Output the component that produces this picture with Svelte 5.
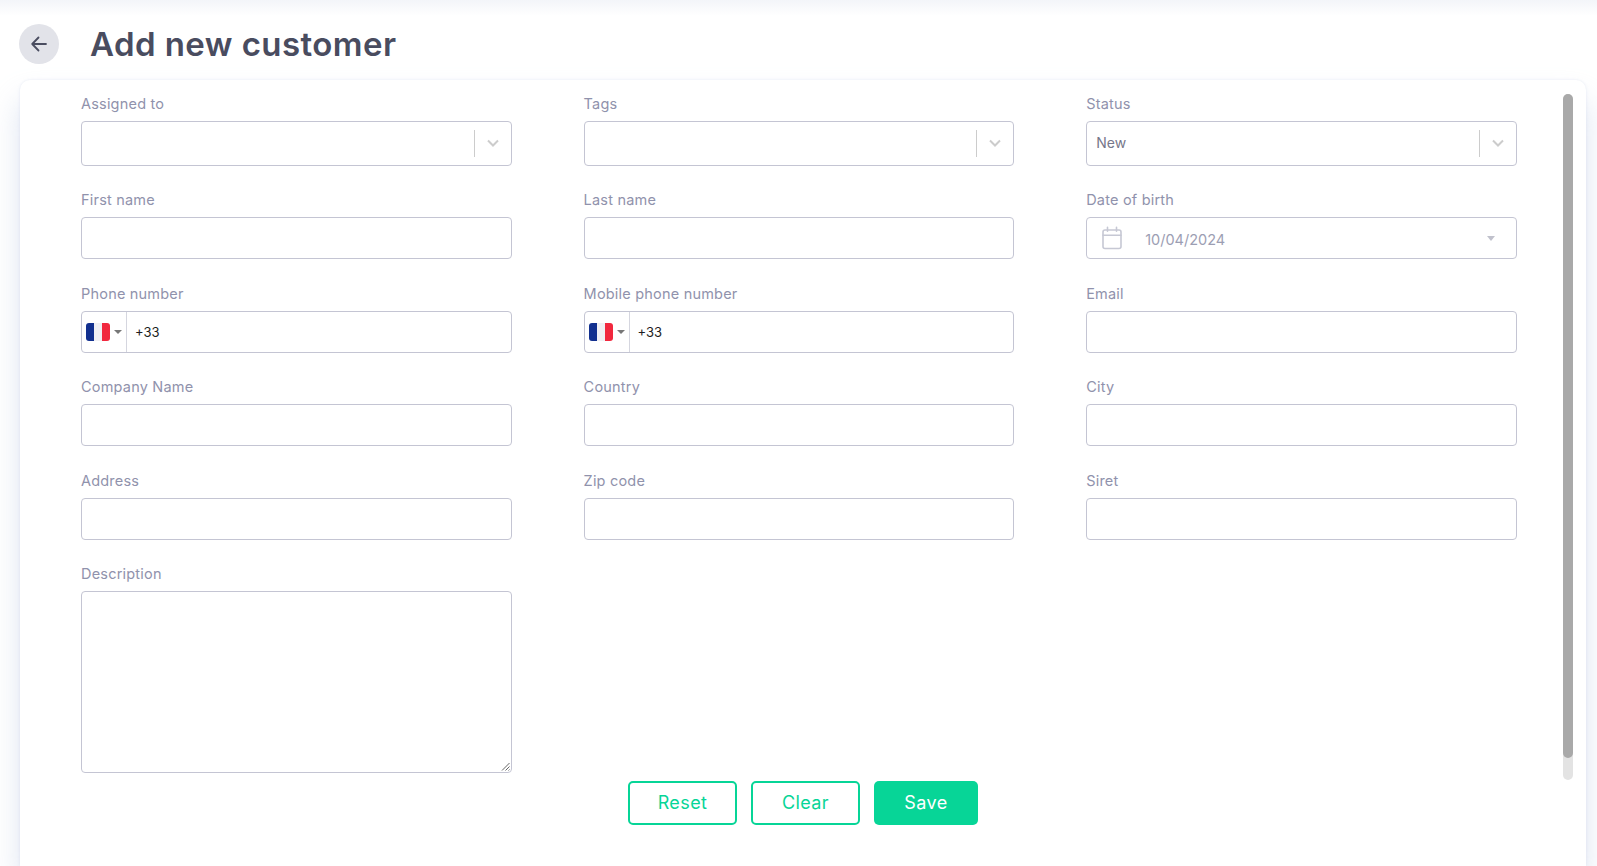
<script>
  const rows = [
    { label: 'Assigned to', type: 'select' },
    { label: 'Tags', type: 'select' },
    { label: 'Status', type: 'select', value: 'New' },
    { label: 'First name', type: 'input' },
    { label: 'Last name', type: 'input' },
    { label: 'Date of birth', type: 'date', value: '10/04/2024' },
    { label: 'Phone number', type: 'phone' },
    { label: 'Mobile phone number', type: 'phone' },
    { label: 'Email', type: 'input' },
    { label: 'Company Name', type: 'input' },
    { label: 'Country', type: 'input' },
    { label: 'City', type: 'input' },
    { label: 'Address', type: 'input' },
    { label: 'Zip code', type: 'input' },
    { label: 'Siret', type: 'input' },
    { label: 'Description', type: 'textarea' }
  ];
</script>

<div class="page">
  <header class="head">
    <button class="back" aria-label="Back">
      <svg width="20" height="20" viewBox="0 0 20 20" fill="none" stroke="#4a4d60" stroke-width="1.8" stroke-linecap="round" stroke-linejoin="round">
        <path d="M17 10H3.2M9.5 3.5 3.2 10l6.3 6.5" />
      </svg>
    </button>
    <h1>Add new customer</h1>
  </header>

  <main class="card">
    <div class="thumbtrack" aria-hidden="true"><div class="thumb"></div></div>
    <form class="grid">
      {#each rows as f}
        <div class="field">
          <span class="lab">{f.label}</span>
          {#if f.type === 'select'}
            <div class="box sel">
              <span class="val">{f.value ?? ''}</span>
              <i class="sep"></i>
              <svg class="chev" width="14" height="14" viewBox="0 0 14 14" fill="none" stroke="#cccccc" stroke-width="2"><path d="M2 4.5 7 9.5l5-5" /></svg>
            </div>
          {:else if f.type === 'date'}
            <div class="box date">
              <svg width="22" height="24" viewBox="0 0 22 24" fill="none" stroke="#c6c8d4" stroke-width="1.6" stroke-linejoin="round" stroke-linecap="round">
                <rect x="2" y="4" width="18" height="18.5" rx="2" />
                <path d="M2 9.2h18M6.5 1.2v4M15.5 1.2v4" />
              </svg>
              <span class="dateval">{f.value}</span>
              <i class="caret"></i>
            </div>
          {:else if f.type === 'phone'}
            <div class="box phone">
              <div class="dial">
                <span class="flag"><i class="b"></i><i class="w"></i><i class="r"></i></span>
                <i class="mini"></i>
              </div>
              <span class="code">+33</span>
            </div>
          {:else if f.type === 'textarea'}
            <div class="box area">
              <svg class="grip" width="9" height="9" viewBox="0 0 9 9" stroke="#666" stroke-width="1" fill="none"><path d="M1 8.5 8.5 1M4.5 8.5l4-4M7.5 8.5l1-1" /></svg>
            </div>
          {:else}
            <div class="box"></div>
          {/if}
        </div>
      {/each}
    </form>
    <div class="actions">
      <button class="btn ghost">Reset</button>
      <button class="btn ghost">Clear</button>
      <button class="btn solid">Save</button>
    </div>
  </main>
</div>

<style>
  :global(body) { margin: 0; overflow: hidden; background: #ffffff; }
  .page {
    height: 866px;
    display: flex;
    flex-direction: column;
    overflow: hidden;
    font-family: Inter, "Open Sans", sans-serif;
    background: linear-gradient(#f3f5f9 0, #ffffff 16px);
  }
  .head {
    display: flex;
    align-items: center;
    height: 80px;
    padding: 8px 0 0 19px;
    box-sizing: border-box;
    flex: none;
  }
  .back {
    width: 40px; height: 40px;
    border-radius: 50%;
    border: 0;
    background: #e2e3e9;
    display: flex; align-items: center; justify-content: center;
    padding: 0;
  }
  h1 {
    margin: 0 0 0 31px;
    font-size: 33px;
    font-weight: 600;
    color: #494c5f;
    letter-spacing: 0.43px;
  }
  .card {
    position: relative;
    flex: 1;
    margin: 0 11px 0 20px;
    padding: 13px 69px 0 61px;
    background: #fff;
    border-radius: 10px 10px 0 0;
    box-shadow: 0 0 3px rgba(190, 200, 225, 0.35), 0 20px 30px rgba(180, 195, 225, 0.45);
  }
  .thumbtrack {
    position: absolute;
    left: 1543px; top: 14px;
    width: 10px; height: 686px;
    background: #e3e3e3;
    border-radius: 5px;
  }
  .thumb {
    height: 664px;
    background: #a9a9a9;
    border-radius: 5px;
  }
  .grid {
    display: grid;
    grid-template-columns: repeat(3, 430.6px);
    column-gap: 72px;
    row-gap: 23.6px;
  }
  .field { display: flex; flex-direction: column; min-width: 0; }
  .lab {
    font-size: 14.5px;
    line-height: 22px;
    letter-spacing: 0.2px;
    margin-bottom: 6px;
    color: #9092ac;
  }
  .box {
    height: 42px;
    box-sizing: border-box;
    border: 1px solid #c4c5d3;
    border-radius: 4px;
    background: #fff;
    display: flex;
    align-items: center;
  }
  .sel { height: 44.5px; padding: 0 10px 0 9px; }
  .val { flex: 1; font-size: 14px; color: #76778a; margin-bottom: 2px; }
  .sep { width: 1px; height: 27px; background: #cccccc; margin-right: 11px; }
  .chev { margin-right: 1px; }
  .date { padding: 0 21px 0 14px; }
  .dateval { flex: 1; margin-left: 22px; margin-top: 2px; font-size: 14.5px; color: #9c9eb3; }
  .caret {
    width: 0; height: 0;
    border-left: 4px solid transparent;
    border-right: 4px solid transparent;
    border-top: 5px solid #c0c1cc;
  }
  .dial {
    width: 45px; height: 100%;
    box-sizing: border-box;
    border-right: 1px solid #d5d6df;
    padding-left: 4px;
    display: flex; align-items: center;
    flex: none;
  }
  .flag {
    display: flex;
    width: 24px; height: 18px;
    border-radius: 3px;
    overflow: hidden;
  }
  .flag i { flex: 1; }
  .b { background: #12308f; }
  .w { background: #f0f0f4; }
  .r { background: #f1283e; }
  .mini {
    width: 0; height: 0;
    margin-left: 4px;
    border-left: 4px solid transparent;
    border-right: 4px solid transparent;
    border-top: 4px solid #777;
  }
  .code { margin-left: 8px; font-size: 13px; color: #1d1d22; }
  .area { height: 182px; position: relative; }
  .grip { position: absolute; right: 1px; bottom: 1px; }
  .actions {
    display: flex;
    justify-content: center;
    gap: 14px;
    margin: 8px -8px 0 -61px;
    width: 1566px;
  }
  .btn {
    font-family: inherit;
    height: 44px;
    box-sizing: border-box;
    border-radius: 5px;
    font-size: 18px;
    letter-spacing: 0.4px;
    padding: 0 0 2px;
  }
  .ghost { width: 109px; border: 2px solid #07d597; background: #fff; color: #07d597; }
  .solid { width: 104px; border: 0; background: #07d597; color: #fff; }
</style>
